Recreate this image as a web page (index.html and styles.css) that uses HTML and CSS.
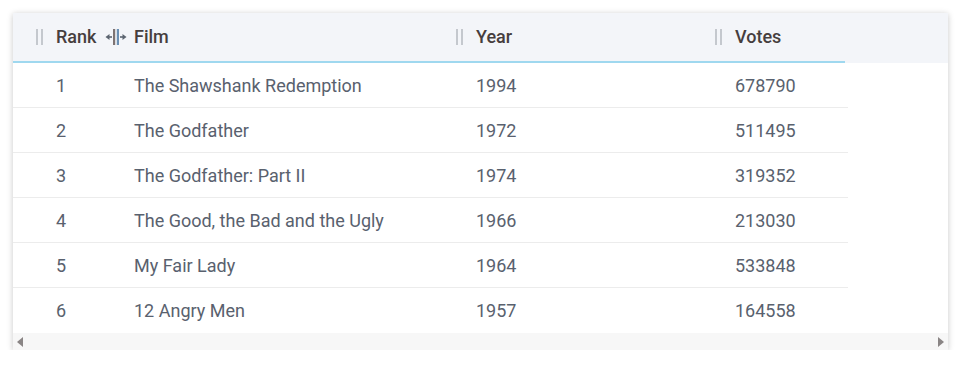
FILE: index.html
```html
<!DOCTYPE html>
<html>
<head>
<meta charset="utf-8">
<link rel="stylesheet" href="styles.css">
</head>
<body>
<div class="card">
  <div class="table">
    <div class="row head">
      <div class="cell c1"><span class="grip"></span><span class="htext">Rank</span></div>
      <div class="cell c2"><svg class="resize" width="22" height="18" viewBox="0 0 22 18"><path d="M0.5 9 L4.5 6 L4.5 12 Z" fill="#5b6470"/><rect x="4" y="8.2" width="3" height="1.6" fill="#5b6470"/><rect x="8" y="1" width="2.2" height="16" fill="#7d7373"/><rect x="11.8" y="1" width="2.2" height="16" fill="#6b8fb3"/><rect x="15" y="8.2" width="3" height="1.6" fill="#5b6470"/><path d="M21.5 9 L17.5 6 L17.5 12 Z" fill="#5b6470"/></svg><span class="htext">Film</span></div>
      <div class="cell c3"><span class="grip"></span><span class="htext">Year</span></div>
      <div class="cell c4"><span class="grip"></span><span class="htext">Votes</span></div>
    </div>
    <div class="row"><div class="cell c1">1</div><div class="cell c2">The Shawshank Redemption</div><div class="cell c3">1994</div><div class="cell c4">678790</div></div>
    <div class="row"><div class="cell c1">2</div><div class="cell c2">The Godfather</div><div class="cell c3">1972</div><div class="cell c4">511495</div></div>
    <div class="row"><div class="cell c1">3</div><div class="cell c2">The Godfather: Part II</div><div class="cell c3">1974</div><div class="cell c4">319352</div></div>
    <div class="row"><div class="cell c1">4</div><div class="cell c2">The Good, the Bad and the Ugly</div><div class="cell c3">1966</div><div class="cell c4">213030</div></div>
    <div class="row"><div class="cell c1">5</div><div class="cell c2">My Fair Lady</div><div class="cell c3">1964</div><div class="cell c4">533848</div></div>
    <div class="row last"><div class="cell c1">6</div><div class="cell c2">12 Angry Men</div><div class="cell c3">1957</div><div class="cell c4">164558</div></div>
  </div>
  <div class="scrollbar"><span class="arrow left"></span><span class="arrow right"></span></div>
</div>
</body>
</html>
```
FILE: styles.css
```css
html, body { margin: 0; padding: 0; background: #fff; }
body { padding: 13px 12px 0 13px; font-family: Roboto, "Liberation Sans", sans-serif; }
.card {
  width: 935px;
  height: 337px;
  background: #fff;
  box-shadow: 0 1px 6px rgba(0,0,0,0.22);
  display: flex;
  flex-direction: column;
  overflow: hidden;
}
.table {
  flex: 1;
  display: flex;
  flex-direction: column;
  background: linear-gradient(#f3f5f9, #f3f5f9) top / 100% 50px no-repeat;
}
.row {
  display: flex;
  width: 835px;
  height: 45px;
  padding-left: 23px;
  box-sizing: border-box;
  border-bottom: 1px solid #ececec;
  align-items: center;
  font-size: 18px;
  color: #59616e;
}
.row.last { border-bottom: none; }
.row.head {
  height: 50px;
  border-bottom: 2px solid #9fd8ef;
  width: 832px;
  color: #463e3e;
  font-weight: 500;
}
.cell { display: flex; align-items: center; padding-left: 20px; box-sizing: border-box; flex: none; }
.head .cell { padding-left: 0; }
.c1 { width: 78px; }
.c2 { width: 342px; }
.c3 { width: 259px; }
.c4 { width: 130px; }
.grip {
  width: 7px;
  height: 16px;
  margin-right: 13px;
  border-left: 2px solid #c4c8ce;
  border-right: 2px solid #c4c8ce;
  box-sizing: border-box;
}
.resize { margin-left: -9px; margin-right: 7px; }
.htext { line-height: 1; }
.scrollbar {
  height: 17px;
  background: #f7f7f7;
  display: flex;
  justify-content: space-between;
  align-items: center;
  padding: 0 4px 0 4px;
}
.arrow { width: 0; height: 0; border-top: 5px solid transparent; border-bottom: 5px solid transparent; }
.arrow.left { border-right: 6px solid #8a8585; }
.arrow.right { border-left: 6px solid #8a8585; }
```
